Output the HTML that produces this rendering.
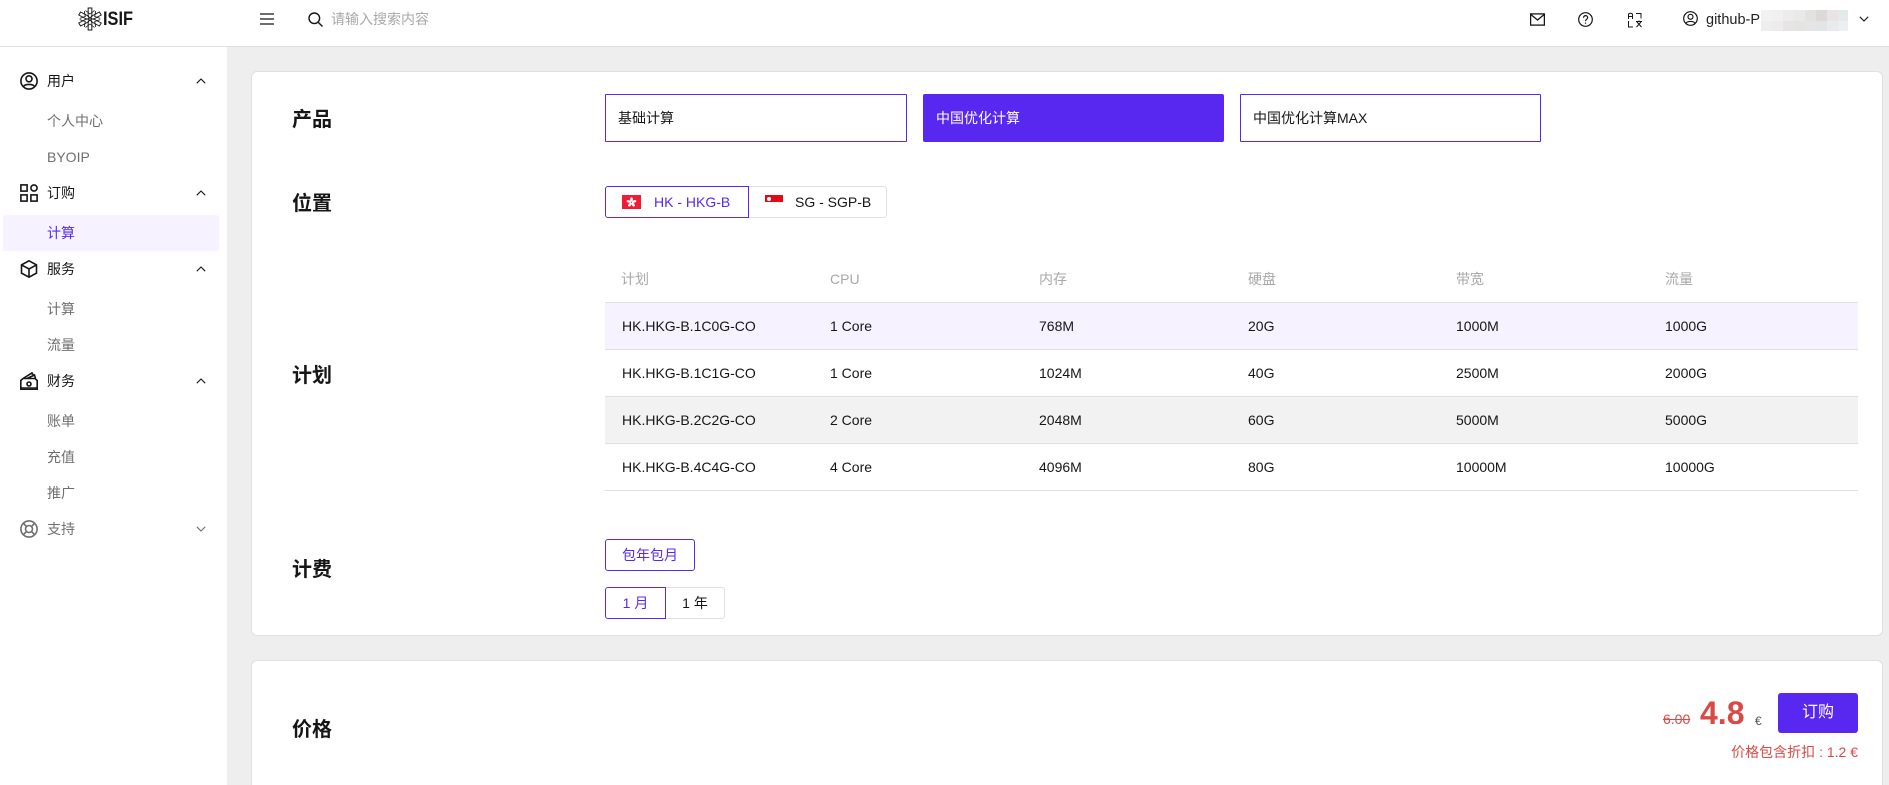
<!DOCTYPE html>
<html lang="zh"><head><meta charset="utf-8"><title>ISIF</title>
<style>
*{box-sizing:border-box}
html,body{margin:0;padding:0;width:1889px;height:785px;overflow:hidden;background:#eeeeee;font-family:"Liberation Sans","Noto Sans CJK SC",sans-serif;color:#161616;font-size:14px}
#w{position:absolute;left:0;top:0;width:1889px;height:785px;overflow:hidden}
.a{position:absolute}
.t{position:absolute;white-space:nowrap;height:20px;line-height:20px;font-size:14px}
.side{color:#6f6f6f}
.h{font-size:20px;font-weight:700;color:#161616;height:30px;line-height:30px;left:292px}
.th{color:#a8a8a8}
.btn{position:absolute;top:94px;height:48px;line-height:46px;width:301px;border:1px solid #5928f0;padding-left:12px;font-size:14px;background:#fff;border-radius:1px}
.row{position:absolute;left:605px;width:1253px;height:47px;border-bottom:1px solid #e0e0e0}
.b{position:absolute;height:11px;width:11px}
svg{position:absolute;fill:none;stroke:#161616}
</style></head>
<body><div id="w">
<!-- header -->
<div class="a" style="left:0;top:0;width:1889px;height:47px;background:#fff;border-bottom:1px solid #e0e0e0"></div>
<svg style="left:77px;top:7px" width="26" height="24" viewBox="0 0 24 24" preserveAspectRatio="none" stroke-width=".9" stroke="#333">
<g><path d="M10.300 1h3.400v8.500l-1.700 1.500-1.700-1.500z"/><path d="M7.800 3.500l4.200 3.500 4.200-3.500" stroke-width=".8"/></g>
<g transform="rotate(60 12 12)"><path d="M10.300 1h3.400v8.500l-1.700 1.500-1.700-1.500z"/><path d="M7.800 3.500l4.200 3.500 4.200-3.500" stroke-width=".8"/></g>
<g transform="rotate(120 12 12)"><path d="M10.300 1h3.400v8.500l-1.700 1.500-1.700-1.500z"/><path d="M7.800 3.500l4.200 3.500 4.200-3.500" stroke-width=".8"/></g>
<g transform="rotate(180 12 12)"><path d="M10.300 1h3.400v8.500l-1.700 1.500-1.700-1.500z"/><path d="M7.800 3.500l4.200 3.500 4.200-3.500" stroke-width=".8"/></g>
<g transform="rotate(240 12 12)"><path d="M10.300 1h3.400v8.500l-1.700 1.500-1.700-1.500z"/><path d="M7.800 3.500l4.200 3.500 4.200-3.500" stroke-width=".8"/></g>
<g transform="rotate(300 12 12)"><path d="M10.300 1h3.400v8.500l-1.700 1.500-1.700-1.500z"/><path d="M7.800 3.500l4.200 3.500 4.200-3.500" stroke-width=".8"/></g>
</svg>
<div class="t" style="left:103px;top:7px;height:24px;font:700 19px/25px 'Liberation Sans',sans-serif;color:#161616;transform:scaleX(.86);transform-origin:left">ISIF</div>
<svg style="left:260px;top:12px" width="14" height="14" viewBox="0 0 14 14" stroke-width="1.300"><path d="M0 2h14M0 7h14M0 12h14"/></svg>
<svg style="left:308px;top:12px" width="15" height="15" viewBox="0 0 15 15" stroke-width="1.400"><circle cx="6.300" cy="6.300" r="5.300"/><path d="M10.200 10.200L14.500 14.500"/></svg>
<div class="t" style="left:331px;top:9px;color:#a8a8a8;font-size:14px">请输入搜索内容</div>
<svg style="left:1530px;top:13px" width="15" height="13" viewBox="0 0 15 13" stroke-width="1.300"><rect x=".6" y=".9" width="13.800" height="11.200"/><path d="M.8 1.500L7.500 7l6.700-5.500"/></svg>
<svg style="left:1578px;top:12px" width="15" height="15" viewBox="0 0 15 15" stroke-width="1.200"><circle cx="7.500" cy="7.500" r="6.800"/><path d="M5.500 5.800c0-3 4.200-2.700 4.200-.2 0 1.700-2.200 1.700-2.200 3.500M7.500 10.500v1.200"/></svg>
<svg style="left:1627px;top:12px" width="16" height="16" viewBox="0 0 16 16" stroke-width="1" stroke="#333"><path d="M1.500 7V2.800Q1.500 1.200 3.500 1.200T5.500 2.800V7M1.500 4.500h4M9 1.500h5v5M1.500 9v6h4.500M9 9.500h6M12 8.500v1M10 10l4.500 5M14 10l-4.500 5"/></svg>
<svg style="left:1683px;top:11px" width="15" height="15" viewBox="0 0 15 15" stroke-width="1.200"><circle cx="7.500" cy="7.500" r="6.800"/><circle cx="7.500" cy="5.800" r="2.500"/><path d="M3 12.300c1-2.500 8-2.500 9 0"/></svg>
<div class="t" style="left:1706px;top:10px;font:14.500px/20px 'Liberation Sans',sans-serif;color:#222">github-P</div>
<div class="a" style="left:1761px;top:10px;width:87px;height:21px;background:#eee"></div>
<div class="b" style="left:1761px;top:10px;background:#f2f2f2"></div><div class="b" style="left:1772px;top:10px;background:#f0f0f0"></div><div class="b" style="left:1783px;top:10px;background:#ececec"></div><div class="b" style="left:1794px;top:10px;background:#e9e9e9"></div><div class="b" style="left:1805px;top:10px;background:#e2e2e3"></div><div class="b" style="left:1816px;top:10px;background:#dcd9d6"></div><div class="b" style="left:1827px;top:10px;background:#e8e4e4"></div><div class="b" style="left:1838px;top:10px;width:10px;background:#e4eaec"></div>
<div class="b" style="left:1761px;top:21px;height:10px;background:#eeeeee"></div><div class="b" style="left:1772px;top:21px;height:10px;background:#ececec"></div><div class="b" style="left:1783px;top:21px;height:10px;background:#e6e5e4"></div><div class="b" style="left:1794px;top:21px;height:10px;background:#e4e4e3"></div><div class="b" style="left:1805px;top:21px;height:10px;background:#e5e5e5"></div><div class="b" style="left:1816px;top:21px;height:10px;background:#e2e5e6"></div><div class="b" style="left:1827px;top:21px;height:10px;background:#e8eaeb"></div><div class="b" style="left:1838px;top:21px;width:10px;height:10px;background:#eceeef"></div>
<svg style="left:1859px;top:16px" width="10" height="6" viewBox="0 0 10 6" stroke-width="1.100"><path d="M.8.8L5 5l4.200-4.200"/></svg>

<!-- sidebar -->
<div class="a" style="left:0;top:47px;width:227px;height:738px;background:#fff"></div>
<div class="a" style="left:3px;top:215px;width:216px;height:36px;background:#f6f2ff;border-radius:3px"></div>
<svg style="left:20px;top:72px" width="18" height="18" viewBox="0 0 18 18" stroke-width="1.600"><circle cx="9" cy="9" r="8.100"/><circle cx="9" cy="6.800" r="3"/><path d="M3.300 14.800c1.200-3.200 10.200-3.200 11.400 0"/></svg>
<div class="t" style="left:47px;top:71px">用户</div>
<svg style="left:196px;top:78px" width="10" height="6" viewBox="0 0 10 6" stroke-width="1.100"><path d="M.8 5.200L5 1l4.200 4.200"/></svg>
<div class="t side" style="left:47px;top:111px">个人中心</div>
<div class="t side" style="left:47px;top:147px">BYOIP</div>
<svg style="left:20px;top:184px" width="18" height="18" viewBox="0 0 18 18" stroke-width="1.600"><rect x=".9" y=".9" width="6.200" height="6.200"/><circle cx="14" cy="4" r="3.100"/><rect x=".9" y="10.900" width="6.200" height="6.200"/><rect x="10.900" y="10.900" width="6.200" height="6.200"/></svg>
<div class="t" style="left:47px;top:183px">订购</div>
<svg style="left:196px;top:190px" width="10" height="6" viewBox="0 0 10 6" stroke-width="1.100"><path d="M.8 5.200L5 1l4.200 4.200"/></svg>
<div class="t" style="left:47px;top:223px;color:#5928f0">计算</div>
<svg style="left:20px;top:260px" width="18" height="18" viewBox="0 0 18 18" stroke-width="1.600"><path d="M9 .8l7.500 4.100v8.200L9 17.200l-7.500-4.100V4.900zM1.500 4.900L9 9l7.500-4.100M9 9v8.200"/></svg>
<div class="t" style="left:47px;top:259px">服务</div>
<svg style="left:196px;top:266px" width="10" height="6" viewBox="0 0 10 6" stroke-width="1.100"><path d="M.8 5.200L5 1l4.200 4.200"/></svg>
<div class="t side" style="left:47px;top:299px">计算</div>
<div class="t side" style="left:47px;top:335px">流量</div>
<svg style="left:20px;top:372px" width="18" height="18" viewBox="0 0 18 18" stroke-width="1.600"><path d="M.8 17.200V8.500L3 6.500h12l2.200 2v8.700zM3 6.500L12 .9l1.800 3M7 6.500l7.500-3.500 1 3.500"/><circle cx="9" cy="12" r="2"/><path d="M.8 15.800h16.400" stroke-width="1.200"/></svg>
<div class="t" style="left:47px;top:371px">财务</div>
<svg style="left:196px;top:378px" width="10" height="6" viewBox="0 0 10 6" stroke-width="1.100"><path d="M.8 5.200L5 1l4.200 4.200"/></svg>
<div class="t side" style="left:47px;top:411px">账单</div>
<div class="t side" style="left:47px;top:447px">充值</div>
<div class="t side" style="left:47px;top:483px">推广</div>
<svg style="left:20px;top:520px;stroke:#6f6f6f" width="18" height="18" viewBox="0 0 18 18" stroke-width="1.600"><circle cx="9" cy="9" r="8.100"/><circle cx="9" cy="9" r="3.500"/><path d="M3.200 3.200l3.300 3.300M14.800 3.200l-3.300 3.300M3.200 14.800l3.300-3.300M14.800 14.800l-3.300-3.300"/></svg>
<div class="t side" style="left:47px;top:519px">支持</div>
<svg style="left:196px;top:526px;stroke:#6f6f6f" width="10" height="6" viewBox="0 0 10 6" stroke-width="1.100"><path d="M.8.8L5 5l4.200-4.200"/></svg>

<!-- card 1 -->
<div class="a" style="left:251px;top:71px;width:1632px;height:565px;background:#fff;border:1px solid #e0e0e0;border-radius:6px"></div>
<div class="t h" style="top:105px">产品</div>
<div class="t h" style="top:189px">位置</div>
<div class="t h" style="top:361px">计划</div>
<div class="t h" style="top:555px">计费</div>

<div class="btn" style="left:605px;width:302px">基础计算</div>
<div class="btn" style="left:923px;background:#5928f0;color:#fff;border-radius:2px">中国优化计算</div>
<div class="btn" style="left:1240px">中国优化计算MAX</div>

<div class="a" style="left:605px;top:186px;width:144px;height:32px;border:1px solid #5928f0;border-radius:3px 0 0 3px;z-index:2"></div>
<div class="a" style="left:748px;top:186px;width:139px;height:32px;border:1px solid #e0e0e0;border-radius:0 3px 3px 0"></div>
<div class="a" style="left:622px;top:195px;width:19px;height:14px;background:#ee1c35"></div>
<svg style="left:626px;top:197px;stroke:none;fill:#fff" width="11" height="10" viewBox="0 0 11 10"><ellipse cx="5.500" cy="2.500" rx="1.300" ry="2.300"/><ellipse cx="5.500" cy="2.500" rx="1.300" ry="2.300" transform="rotate(72 5.500 5.300)"/><ellipse cx="5.500" cy="2.500" rx="1.300" ry="2.300" transform="rotate(144 5.500 5.300)"/><ellipse cx="5.500" cy="2.500" rx="1.300" ry="2.300" transform="rotate(216 5.500 5.300)"/><ellipse cx="5.500" cy="2.500" rx="1.300" ry="2.300" transform="rotate(288 5.500 5.300)"/></svg>
<div class="t" style="left:654px;top:192px;color:#5928f0">HK - HKG-B</div>
<div class="a" style="left:765px;top:195px;width:18px;height:7px;background:#e20a16"></div>
<div class="a" style="left:767px;top:197px;width:4px;height:4px;border-radius:50%;background:#fff"></div>
<div class="t" style="left:795px;top:192px">SG - SGP-B</div>

<!-- table -->
<div class="t th" style="left:621px;top:269px">计划</div>
<div class="t th" style="left:830px;top:269px">CPU</div>
<div class="t th" style="left:1039px;top:269px">内存</div>
<div class="t th" style="left:1248px;top:269px">硬盘</div>
<div class="t th" style="left:1456px;top:269px">带宽</div>
<div class="t th" style="left:1665px;top:269px">流量</div>

<div class="a" style="left:605px;top:302px;width:1253px;height:1px;background:#e0e0e0"></div>
<div class="row" style="top:303px;background:#f6f2ff"></div>
<div class="t" style="left:622px;top:316px">HK.HKG-B.1C0G-CO</div>
<div class="t" style="left:830px;top:316px">1 Core</div>
<div class="t" style="left:1039px;top:316px">768M</div>
<div class="t" style="left:1248px;top:316px">20G</div>
<div class="t" style="left:1456px;top:316px">1000M</div>
<div class="t" style="left:1665px;top:316px">1000G</div>

<div class="row" style="top:350px"></div>
<div class="t" style="left:622px;top:363px">HK.HKG-B.1C1G-CO</div>
<div class="t" style="left:830px;top:363px">1 Core</div>
<div class="t" style="left:1039px;top:363px">1024M</div>
<div class="t" style="left:1248px;top:363px">40G</div>
<div class="t" style="left:1456px;top:363px">2500M</div>
<div class="t" style="left:1665px;top:363px">2000G</div>

<div class="row" style="top:397px;background:#f2f2f2"></div>
<div class="t" style="left:622px;top:410px">HK.HKG-B.2C2G-CO</div>
<div class="t" style="left:830px;top:410px">2 Core</div>
<div class="t" style="left:1039px;top:410px">2048M</div>
<div class="t" style="left:1248px;top:410px">60G</div>
<div class="t" style="left:1456px;top:410px">5000M</div>
<div class="t" style="left:1665px;top:410px">5000G</div>

<div class="row" style="top:444px"></div>
<div class="t" style="left:622px;top:457px">HK.HKG-B.4C4G-CO</div>
<div class="t" style="left:830px;top:457px">4 Core</div>
<div class="t" style="left:1039px;top:457px">4096M</div>
<div class="t" style="left:1248px;top:457px">80G</div>
<div class="t" style="left:1456px;top:457px">10000M</div>
<div class="t" style="left:1665px;top:457px">10000G</div>

<!-- billing -->
<div class="a" style="left:605px;top:539px;width:90px;height:32px;border:1px solid #5928f0;border-radius:3px;color:#5928f0;text-align:center;font-size:14px;line-height:30px">包年包月</div>
<div class="a" style="left:605px;top:587px;width:61px;height:32px;border:1px solid #5928f0;border-radius:3px 0 0 3px;color:#5928f0;text-align:center;font-size:14px;line-height:30px;z-index:2">1 月</div>
<div class="a" style="left:665px;top:587px;width:60px;height:32px;border:1px solid #e0e0e0;border-radius:0 3px 3px 0;text-align:center;font-size:14px;line-height:30px">1 年</div>

<!-- card 2 -->
<div class="a" style="left:251px;top:660px;width:1632px;height:125px;background:#fff;border:1px solid #e0e0e0;border-bottom:0;border-radius:6px 6px 0 0"></div>
<div class="t h" style="top:715px">价格</div>
<div class="t" style="left:1663px;top:709px;color:#da4a45;text-decoration:line-through">6.00</div>
<div class="t" style="left:1700px;top:693px;height:40px;line-height:40px;font-size:32px;font-weight:700;color:#da4a45">4.8</div>
<div class="t" style="left:1755px;top:711px;font-size:12px;color:#525252">€</div>
<div class="a" style="left:1778px;top:693px;width:80px;height:40px;background:#5928f0;border-radius:3px;color:#fff;text-align:center;line-height:40px;font-size:16px">订购</div>
<div class="t" style="right:31px;top:742px;color:#da4a45">价格包含折扣 : 1.2 €</div>
</div></body></html>
